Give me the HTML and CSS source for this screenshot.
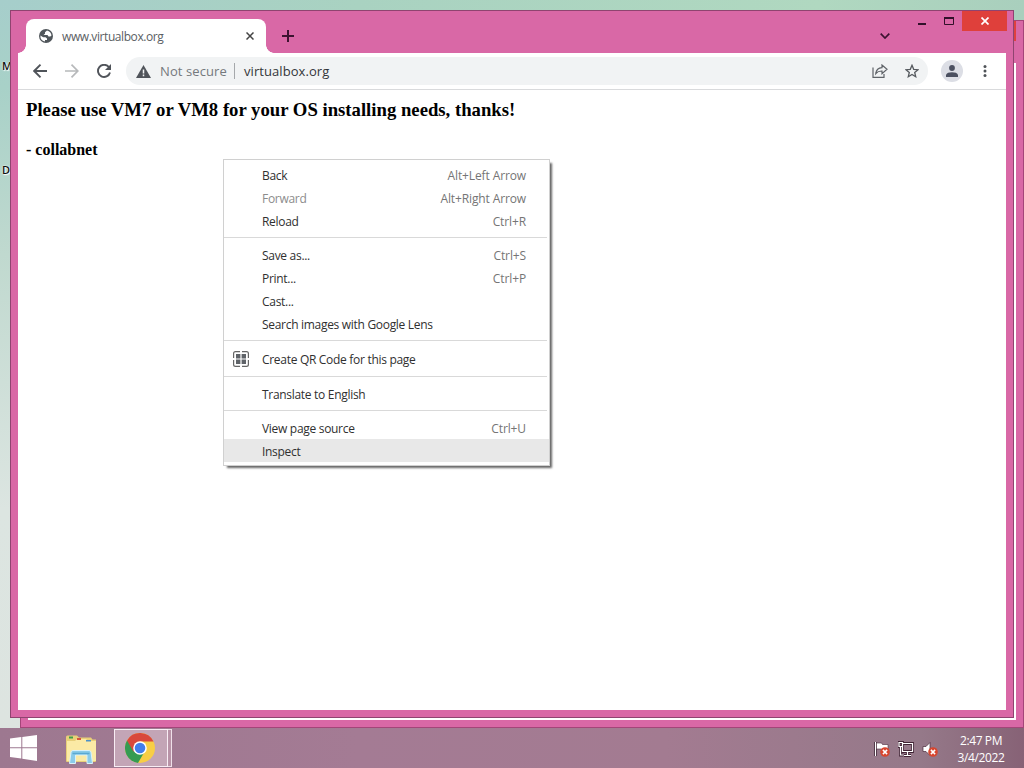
FILE: index.html
```html
<!DOCTYPE html>
<html lang="en">
<head>
  <meta charset="UTF-8" />
  <title>www.virtualbox.org</title>
  <link rel="stylesheet" href="styles.css">
</head>
<body>
  <div class="desktop">
    <span class="desktop-label label-top">M</span>
    <span class="desktop-label label-bottom">D</span>

    <div class="back-window">
      <div class="back-close"></div>
      <div class="back-page"></div>
    </div>

    <div class="window">
      <div class="titlebar">
        <div class="tab">
          <svg class="globe" width="14" height="14" viewBox="0 0 14 14">
            <circle cx="7" cy="7" r="7" fill="#50565b"/>
            <path d="M8 1.5 6 3.2v1.6L4.5 6h4l1 1.5h1.8l1.2-1A5.7 5.7 0 0 0 8 1.5zM1.4 6.6A5.6 5.6 0 0 0 6 12.5v-1.6h2V9.4L6.5 8.3H4.2z" fill="#fff"/>
          </svg>
          <span class="tab-title">www.virtualbox.org</span>
          <svg class="tab-close" width="8" height="8" viewBox="0 0 8 8"><path d="M.5.5l7 7M7.5.5l-7 7" stroke="#444" stroke-width="1.5"/></svg>
        </div>
        <svg class="new-tab" width="12" height="12" viewBox="0 0 12 12"><path d="M6 0v12M0 6h12" stroke="#3d1230" stroke-width="2"/></svg>
        <svg class="tab-search" width="10" height="6" viewBox="0 0 10 6"><path d="M.7.7 5 5 9.3.7" fill="none" stroke="#3d1230" stroke-width="1.7"/></svg>
        <div class="controls">
          <svg class="minimize" width="8" height="2"><path d="M0 1h8" stroke="#32102a" stroke-width="2"/></svg>
          <svg class="maximize" width="10" height="8"><path d="M.5 1v6.5h9V1" fill="none" stroke="#32102a"/><path d="M0 1h10" stroke="#32102a" stroke-width="2"/></svg>
          <div class="close"><svg width="8" height="8" viewBox="0 0 8 8"><path d="M.5.5l7 7M7.5.5l-7 7" stroke="#fff" stroke-width="1.7"/></svg></div>
        </div>
      </div>

      <div class="toolbar">
        <svg class="back" width="14" height="14" viewBox="0 0 14 14"><path d="M14 7H1.5M7.5.7 1.2 7l6.3 6.3" fill="none" stroke="#50545a" stroke-width="1.9"/></svg>
        <svg class="forward" width="14" height="14" viewBox="0 0 14 14"><path d="M0 7h12.5M6.5.7 12.8 7l-6.3 6.3" fill="none" stroke="#b7b9bb" stroke-width="1.7"/></svg>
        <svg class="reload" width="14" height="14" viewBox="0 0 14 14"><path d="M11.8 3A6.1 6.1 0 1 0 13 8.5" fill="none" stroke="#50545a" stroke-width="1.9"/><path d="M14 0v6H8z" fill="#50545a"/></svg>
        <div class="omnibox">
          <svg width="15" height="13" viewBox="0 0 15 13"><path d="M7.5 0 15 13H0z" fill="#50545a"/><path d="M7.5 4.5v4M7.5 9.6v1.6" stroke="#f1f3f4" stroke-width="1.5"/></svg>
          <span class="not-secure">Not secure</span>
          <span class="divider"></span>
          <span class="url">virtualbox.org</span>
          <svg class="share" width="16" height="14" viewBox="0 0 16 14" fill="none" stroke="#5f6368" stroke-width="1.2"><path d="M1 3.5v9.8h11V10"/><path d="M10 1v2.600C6.500 3.800 4.200 6 3.800 9.500 5.500 7.500 7.500 6.900 10 7v2.700l5-4.400z"/></svg>
          <svg class="star" width="14" height="14" viewBox="0 0 14 14"><path d="m7 1.300 1.700 4 4.300.4-3.300 2.800 1 4.200L7 10.500l-3.700 2.200 1-4.200L1 5.700l4.300-.4z" fill="none" stroke="#55595e" stroke-width="1.3"/></svg>
        </div>
        <div class="avatar"><svg width="12" height="12" viewBox="0 0 12 12" fill="#4b5060"><circle cx="6" cy="3" r="2.900"/><path d="M0 12V9.800C.5 7.900 3 7.200 6 7.200s5.500.7 6 2.600V12z"/></svg></div>
        <svg class="more" width="4" height="12" viewBox="0 0 4 12" fill="#4f5358"><circle cx="2" cy="1.500" r="1.500"/><circle cx="2" cy="6" r="1.500"/><circle cx="2" cy="10.500" r="1.500"/></svg>
      </div>

      <div class="page">
        <h3>Please use VM7 or VM8 for your OS installing needs, thanks!</h3>
        <h4>- collabnet</h4>
      </div>
    </div>

    <div class="menu">
      <div class="item"><span>Back</span><span class="key">Alt+Left Arrow</span></div>
      <div class="item disabled"><span>Forward</span><span class="key">Alt+Right Arrow</span></div>
      <div class="item"><span>Reload</span><span class="key">Ctrl+R</span></div>
      <div class="sep"></div>
      <div class="item"><span>Save as...</span><span class="key">Ctrl+S</span></div>
      <div class="item"><span>Print...</span><span class="key">Ctrl+P</span></div>
      <div class="item"><span>Cast...</span></div>
      <div class="item"><span>Search images with Google Lens</span></div>
      <div class="sep tall"></div>
      <div class="item with-icon">
        <svg width="16" height="16" viewBox="0 0 16 16"><path d="M7 .6H2.500Q.6.6.6 2.500V7M9 .6h4.500q1.900 0 1.900 1.900V7M7 15.400H2.500q-1.900 0-1.900-1.900V9M9 15.400h4.500q1.900 0 1.900-1.900V9" fill="none" stroke="#666" stroke-width="1.2"/><path d="M3 3h4.400v4.400H3zM8.600 3H13v4.400H8.600zM3 8.600h4.400V13H3zM8.600 8.600H13V13H8.600z" fill="#5f6368"/></svg>
        <span>Create QR Code for this page</span>
      </div>
      <div class="sep low"></div>
      <div class="item"><span>Translate to English</span></div>
      <div class="sep"></div>
      <div class="item"><span>View page source</span><span class="key">Ctrl+U</span></div>
      <div class="item active"><span>Inspect</span></div>
    </div>

    <div class="taskbar">
      <svg class="start" width="27" height="26" viewBox="0 0 27 26" fill="#fff"><path d="M0 3.500 11.300 2v10.300H0zM12.300 1.900 27 0v12.300H12.300zM0 13.300h11.300v10.200L0 22zM12.300 13.300H27V26l-14.700-2.200z"/></svg>
      <svg class="explorer" width="32" height="29" viewBox="0 0 32 29">
        <path d="M1 2q0-1.500 1.500-1.500H12l2 2h12l1.500 2H31V26q0 1-1 1H2q-1 0-1-1z" fill="#e8cf79"/>
        <path d="M2 6h8l2-2h9l2 2h8v20H2z" fill="#fbeaa5"/>
        <path d="M4 1.500h4v2H4z" fill="#3f9c4c"/><path d="M12 3h4v2h-4z" fill="#d8543c"/><path d="M21 5h5v1.500h-5z" fill="#4b91c9"/>
        <path d="M4.500 28.500 6 17q.4-1.500 2-1.500h16q1.600 0 2 1.500l1.500 11.500H22V20H10.500v8.500z" fill="#8bcbe9" stroke="#d8f1fa"/>
        <path d="M7.500 18.500h17" stroke="#5aa9d2" stroke-width="1.5"/>
      </svg>
      <div class="task-button">
        <svg width="30" height="30" viewBox="0 0 30 30">
          <circle cx="15" cy="15" r="15" fill="#f8ce45"/>
          <path d="M15 15 2 7.500A15 15 0 0 0 13 29.900l7-12z" fill="#359b52"/>
          <path d="M2 7.500A15 15 0 0 1 28.500 8.500H15L8.500 18.700z" fill="#d9483b"/>
          <circle cx="15" cy="15" r="6.800" fill="#fff"/>
          <circle cx="15" cy="15" r="5.300" fill="#427eeb"/>
        </svg>
      </div>
      <div class="task-stack"></div>
      <div class="tray">
        <svg width="16" height="16" viewBox="0 0 16 16"><path d="M1.500 1v14" stroke="#371b2c" stroke-width="3"/><path d="M1.500 1v14" stroke="#fff" stroke-width="1.300"/><path d="M2.500 2h5l1 1.500H14V9H8L7 8H2.500z" fill="#fff" stroke="#4b2b3c" stroke-width=".6"/><circle cx="11" cy="11" r="4.800" fill="#d7462f"/><path d="m8.900 8.900 4.200 4.200m0-4.200-4.200 4.200" stroke="#fff" stroke-width="1.500"/></svg>
        <svg width="16" height="16" viewBox="0 0 16 16" fill="none"><path d="M4.500 2.500h10v8h-10zM9.500 11v3M6 14.500h7M2.500 5.500V14h3M1 1.500h3.500v4H1z" stroke="#402334" stroke-width="2.800"/><path d="M4.500 2.500h10v8h-10zM9.500 11v3M6 14.500h7M2.500 5.500V14h3M1 1.500h3.500v4H1z" stroke="#fff" stroke-width="1.200"/></svg>
        <svg width="16" height="16" viewBox="0 0 16 16"><path d="M1 5.500h3L8 1.500v13L4 10.500H1z" fill="#fff" stroke="#4b2b3c" stroke-width=".7"/><circle cx="11" cy="11" r="4.800" fill="#d7462f"/><path d="m8.900 8.900 4.200 4.200m0-4.200-4.200 4.200" stroke="#fff" stroke-width="1.500"/></svg>
      </div>
      <div class="clock"><span>2:47 PM</span><span>3/4/2022</span></div>
    </div>
  </div>
</body>
</html>
```
FILE: styles.css
```css
* {
  box-sizing: border-box;
}

body {
  margin: 0;
  font-family: "Open Sans", "Noto Sans", sans-serif;
}

svg {
  display: block;
  flex: none;
}

span {
  white-space: nowrap;
}

.desktop {
  position: relative;
  width: 1024px;
  height: 768px;
  overflow: hidden;
  display: flex;
  flex-direction: column;
  justify-content: flex-end;
  background: linear-gradient(90deg, #a6cecb, #a9d2c1 35%, #b0d8c0 80%, #a9cfbd);
}

.desktop::before {
  content: "";
  flex: 1;
  width: 20px;
  background: linear-gradient(#a6cecb, #a8d1c8 12%, #c0d9cf 35%, #dce5e1 70%, #dde4e0);
}

.desktop-label {
  position: absolute;
  left: 2px;
  font-size: 11px;
  font-weight: 600;
  line-height: 14px;
  color: #111;
  text-shadow: 0 0 2px #fff, 1px 1px 1px #fff;
}

.label-top {
  top: 59px;
}

.label-bottom {
  top: 163px;
}

/* windows */
.back-window {
  position: absolute;
  left: 20px;
  top: 20px;
  width: 1004px;
  height: 708px;
  padding: 0 7px 7px;
  background: #d968a6;
  border: 1px solid #a44579;
  display: flex;
  flex-direction: column;
}

.back-close {
  align-self: flex-end;
  width: 44px;
  height: 20px;
  margin-bottom: 22px;
  background: #df403f;
}

.back-page {
  flex: 1;
  background: #fff;
}

.window {
  position: absolute;
  left: 10px;
  top: 10px;
  width: 1004px;
  height: 708px;
  padding: 0 7px 7px;
  background: #d968a6;
  border: 1px solid #8f4470;
  display: flex;
  flex-direction: column;
}

.titlebar {
  height: 42px;
  display: flex;
  align-items: flex-start;
}

.tab {
  position: relative;
  width: 240px;
  height: 34px;
  margin: 8px 0 0 8px;
  padding: 0 12px 0 13px;
  display: flex;
  align-items: center;
  background: #fff;
  border-radius: 8px 8px 0 0;
}

.tab::before,
.tab::after {
  content: "";
  position: absolute;
  bottom: 0;
  width: 8px;
  height: 8px;
}

.tab::before {
  left: -8px;
  background: radial-gradient(circle at 0 0, transparent 7.5px, #fff 8px);
}

.tab::after {
  right: -8px;
  background: radial-gradient(circle at 100% 0, transparent 7.5px, #fff 8px);
}

.tab-title {
  margin-left: 9px;
  font-size: 12px;
  letter-spacing: -0.42px;
  color: #5a5e63;
}

.tab-close {
  margin-left: auto;
}

.new-tab {
  margin: 19px 0 0 16px;
}

.tab-search {
  margin: 22px 0 0 auto;
}

.controls {
  display: flex;
  margin: 0 -1px 0 28px;
}

.minimize {
  margin-top: 12px;
}

.maximize {
  margin: 6px 8px 0 18px;
}

.close {
  width: 45px;
  height: 20px;
  display: flex;
  align-items: center;
  justify-content: center;
  background: #df403b;
}

.toolbar {
  height: 37px;
  padding: 0 19px 0 15px;
  display: flex;
  align-items: center;
  background: #fff;
  border-bottom: 1px solid #d9dadc;
}

.forward {
  margin-left: 18px;
}

.reload {
  margin-left: 18px;
}

.omnibox {
  flex: 1;
  height: 28px;
  margin: 0 13px 0 15px;
  padding: 0 9px 0 10px;
  display: flex;
  align-items: center;
  background: #f1f3f4;
  border-radius: 14px;
  font-size: 13px;
}

.not-secure {
  margin-left: 9px;
  width: 67px;
  letter-spacing: 0.1px;
  color: #75797d;
}

.divider {
  width: 1px;
  height: 16px;
  margin: 0 9px 0 7px;
  background: #a5a8ab;
}

.url {
  letter-spacing: 0.07px;
  color: #33363a;
}

.share {
  margin-left: auto;
}

.star {
  margin-left: 17px;
}

.avatar {
  width: 22px;
  height: 22px;
  display: flex;
  align-items: center;
  justify-content: center;
  background: #dcdee5;
  border-radius: 50%;
}

.more {
  margin-left: 20px;
}

.page {
  flex: 1;
  padding: 8px;
  background: #fff;
  font-family: "Liberation Serif", serif;
  color: #000;
}

.page h3 {
  margin: 0;
  font-size: 18.72px;
  line-height: 23px;
}

.page h4 {
  margin: 20px 0 0;
  font-size: 16px;
  line-height: 18px;
}

/* context menu */
.menu {
  position: absolute;
  left: 223px;
  top: 159px;
  width: 327px;
  padding: 3px 0;
  background: #fff;
  border: 1px solid #d0d0d0;
  box-shadow: 3px 3px 2px -1px rgba(0, 0, 0, 0.6);
  font-size: 12px;
  letter-spacing: -0.3px;
  color: #303030;
}

.item {
  height: 23px;
  padding: 2px 23px 0 38px;
  display: flex;
  align-items: center;
  justify-content: space-between;
}

.key {
  letter-spacing: -0.12px;
  color: #757575;
}

.disabled {
  color: #8c8c8c;
}

.with-icon {
  justify-content: flex-start;
  gap: 13px;
  padding-left: 9px;
}

.with-icon svg {
  margin-top: -2px;
}

.active {
  background: #e8e8e8;
}

.sep {
  height: 1px;
  margin: 5px 2px 5px 0;
  background: #d9d9d9;
}

.sep.tall {
  margin-bottom: 6px;
}

.sep.low {
  margin-top: 6px;
}

/* taskbar */
.taskbar {
  height: 40px;
  display: flex;
  align-items: center;
  background: linear-gradient(90deg, #9d7890, #a47b94 35%, #a37b91 65%, #957989 90%, #876276);
}

.start {
  margin-left: 10px;
}

.explorer {
  margin: 3px 0 0 28px;
}

.task-button {
  width: 54px;
  height: 38px;
  margin-left: 17px;
  padding-right: 2px;
  display: flex;
  align-items: center;
  justify-content: center;
  background: #c3a5b6;
  border: 1px solid #f8edf4;
}

.task-stack {
  width: 4px;
  height: 38px;
  background: #b893a7;
  border: 1px solid #f0e0e9;
  border-left: 0;
}

.tray {
  display: flex;
  gap: 8px;
  margin: 2px 0 0 auto;
}

.clock {
  width: 60px;
  margin: 1px 13px 0 13px;
  display: flex;
  flex-direction: column;
  align-items: center;
  font-size: 12px;
  line-height: 17px;
  letter-spacing: -0.4px;
  color: #fff;
}
```
